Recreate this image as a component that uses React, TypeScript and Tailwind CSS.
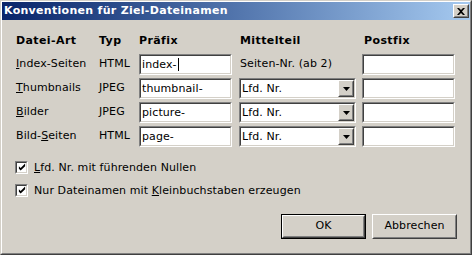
const font = "font-['DejaVu_Sans',sans-serif]";

function Sunken({ className = "", children }: { className?: string; children?: React.ReactNode }) {
  return (
    <div className={`border border-t-[#808080] border-l-[#808080] border-b-white border-r-white ${className}`}>
      <div className="flex h-full w-full items-center border border-t-[#404040] border-l-[#404040] border-b-[#d4d0c8] border-r-[#d4d0c8] bg-white">
        {children}
      </div>
    </div>
  );
}

function Raised({ className = "", children }: { className?: string; children?: React.ReactNode }) {
  return (
    <div className={`border border-t-white border-l-white border-b-[#404040] border-r-[#404040] bg-[#d4d0c8] ${className}`}>
      <div className="flex h-full w-full items-center justify-center border border-t-[#d4d0c8] border-l-[#d4d0c8] border-b-[#808080] border-r-[#808080]">
        {children}
      </div>
    </div>
  );
}

function TextBox({ value, caret }: { value: string; caret?: boolean }) {
  return (
    <Sunken className="h-[21px] w-[93px]">
      <span className="pl-[1px] leading-none">{value}</span>
      {caret ? <span className="ml-[1px] h-[13px] w-px bg-black" /> : null}
    </Sunken>
  );
}

function Combo({ value }: { value: string }) {
  return (
    <Sunken className="h-[21px] w-[117px]">
      <span className="flex-1 pl-[1px] leading-none">{value}</span>
      <Raised className="h-[17px] w-[16px]">
        <svg width="7" height="4" viewBox="0 0 7 4">
          <path d="M0 0h7L3.5 4z" fill="#000" />
        </svg>
      </Raised>
    </Sunken>
  );
}

function Check({ children }: { children: React.ReactNode }) {
  return (
    <div className="flex h-[13px] items-center gap-[6px] leading-[13px]">
      <Sunken className="h-[13px] w-[13px]">
        <svg width="9" height="9" viewBox="0 0 9 9" className="ml-[1px]">
          <path d="M1 3v3l2 2 5-5V0L3 5z" fill="#000" />
        </svg>
      </Sunken>
      <span>{children}</span>
    </div>
  );
}

const rows = [
  { art: <><u>I</u>ndex-Seiten</>, typ: "HTML", pre: "index-", caret: true, mid: null },
  { art: <><u>T</u>humbnails</>, typ: "JPEG", pre: "thumbnail-", mid: "Lfd. Nr." },
  { art: <><u>B</u>ilder</>, typ: "JPEG", pre: "picture-", mid: "Lfd. Nr." },
  { art: <>Bild-<u>S</u>eiten</>, typ: "HTML", pre: "page-", mid: "Lfd. Nr." },
];

const head = "mb-[2px] h-[16px] font-bold leading-[16px] tracking-[0.4px]";

export default function App() {
  return (
    <div className={`h-[255px] w-[472px] border border-t-[#d4d0c8] border-l-[#d4d0c8] border-b-[#404040] border-r-[#404040] bg-[#d4d0c8] text-[11px] tracking-[0.1px] text-black ${font}`}>
      <div className="flex h-full flex-col border border-t-white border-l-white border-b-[#808080] border-r-[#808080]">
        <div className="flex h-[18px] items-center justify-between bg-gradient-to-r from-[#0a246a] to-[#a6caf0] pl-[2px] pr-[1px]">
          <span className="font-bold tracking-[0.3px] text-white">Konventionen für Ziel-Dateinamen</span>
          <Raised className="h-[14px] w-[16px]">
            <svg width="8" height="7" viewBox="0 0 8 7">
              <path d="M0 0h2l2 2 2-2h2L5 3.5 8 7H6L4 5 2 7H0l3-3.5z" fill="#000" />
            </svg>
          </Raised>
        </div>

        <div className="grid grid-cols-[83px_40px_100px_123px_93px] items-center gap-y-[3px] pl-[14px] pt-[13px]">
          <div className={head}>Datei-Art</div>
          <div className={head}>Typ</div>
          <div className={head}>Präfix</div>
          <div className={`${head} pl-[1px]`}>Mittelteil</div>
          <div className={`${head} pl-[2px]`}>Postfix</div>
          {rows.map((r, i) => (
            <div key={i} className="contents">
              <div>{r.art}</div>
              <div>{r.typ}</div>
              <TextBox value={r.pre} caret={r.caret} />
              {r.mid ? <Combo value={r.mid} /> : <div className="pl-[1px]">Seiten-Nr. (ab 2)</div>}
              <TextBox value="" />
            </div>
          ))}
        </div>

        <div className="mt-[14px] flex flex-col gap-[10px] pl-[13px]">
          <Check>
            <u>L</u>fd. Nr. mit führenden Nullen
          </Check>
          <Check>
            Nur Dateinamen mit <u>K</u>leinbuchstaben erzeugen
          </Check>
        </div>

        <div className="mt-[17px] flex justify-end gap-[6px] pr-[13px]">
          <div className="border border-black">
            <Raised className="h-[23px] w-[83px]">OK</Raised>
          </div>
          <Raised className="h-[25px] w-[85px]">Abbrechen</Raised>
        </div>
      </div>
    </div>
  );
}
